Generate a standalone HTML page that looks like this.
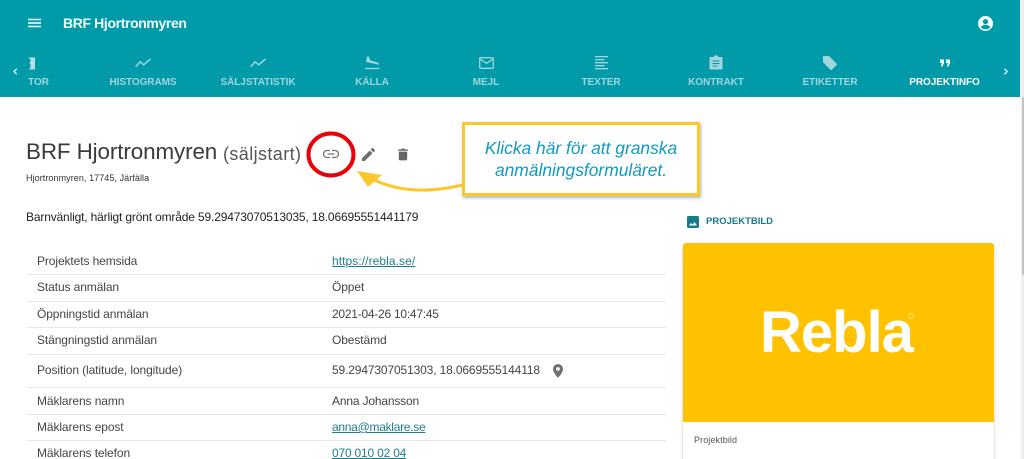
<!DOCTYPE html>
<html lang="sv">
<head>
<meta charset="utf-8">
<title>BRF Hjortronmyren</title>
<style>
html,body{margin:0;padding:0;background:#fff;overflow:hidden;width:1024px;height:459px;}
#p{width:1024px;height:459px;overflow:hidden;position:relative;font-family:"Liberation Sans",sans-serif;color:#333;}
.a{position:absolute;white-space:nowrap;}
#hdr{position:absolute;left:0;top:0;width:1020px;height:97px;background:#009aa9;}
.tab{position:absolute;top:76px;font-size:10px;line-height:13px;font-weight:bold;letter-spacing:-.05px;color:#9fd6dc;transform:translateX(-50%);white-space:nowrap;}
.tab.on{color:#fff;}
.lab,.val{position:absolute;font-size:12px;line-height:16px;color:#444;white-space:nowrap;letter-spacing:-.1px;}
.lab{left:37px;}
.val{left:332px;}
.val.l{color:#1d7f8c;text-decoration:underline;text-underline-offset:1px;}
.rule{position:absolute;left:27px;width:639px;height:1px;background:#e8e8e8;}
svg{position:absolute;overflow:visible;}
</style>
</head>
<body>
<div id="p">
<div id="hdr"></div>

<!-- hamburger -->
<svg style="left:28px;top:18px" width="14" height="10"><path d="M0 1.500h13M0 5h13M0 8.500h13" stroke="#fff" stroke-width="1.500"/></svg>
<div class="a" style="left:63px;top:14px;font-size:14px;line-height:18px;font-weight:bold;color:#f2fbfb;letter-spacing:-.37px">BRF Hjortronmyren</div>
<!-- account -->
<svg style="left:978px;top:15.500px" width="15" height="15" viewBox="0 0 15 15"><circle cx="7.500" cy="7.500" r="7.500" fill="#fff"/><circle cx="7.500" cy="5.600" r="2.600" fill="#009aa9"/><path d="M2.800 11.200c1-1.700 2.900-2.300 4.700-2.300s3.700.6 4.700 2.300c-1.100 1.400-2.800 2.100-4.700 2.100s-3.600-.7-4.700-2.100z" fill="#009aa9"/></svg>

<!-- arrows -->
<svg style="left:12px;top:68px" width="6" height="7"><path d="M4.800.7L2 3.500l2.800 2.800" fill="none" stroke="#d8eff1" stroke-width="1.400"/></svg>
<svg style="left:1003px;top:68px" width="6" height="7"><path d="M1.400.7l2.800 2.800-2.800 2.800" fill="none" stroke="#d8eff1" stroke-width="1.400"/></svg>

<!-- tab icons -->
<svg style="left:28px;top:57px" width="8" height="13"><path d="M0 .5h7V12.500H1l1.500-2V7L1 6l1.500-1V2.500z" fill="#b7e0e5"/></svg>
<svg style="left:135px;top:58px" width="17" height="10"><path d="M.7 8.800l4.500-5 3.500 3L15.500 1" fill="none" stroke="#9fd6dc" stroke-width="1.500"/></svg>
<svg style="left:250px;top:58px" width="17" height="10"><path d="M.7 8.800l4.500-5 3.500 3L15.500 1" fill="none" stroke="#9fd6dc" stroke-width="1.500"/></svg>
<svg style="left:365px;top:56px" width="15" height="14"><path d="M0 12.500h14.500" stroke="#9fd6dc" stroke-width="1.300"/><path d="M2 .5l1.500-.3 2 4.300 5 1.300c1.200.3 2.800.9 3.500 2l-.2 1L1 6z" fill="#9fd6dc"/></svg>
<svg style="left:479px;top:57px" width="15" height="12"><rect x=".7" y=".7" width="13.600" height="10.600" rx="1" fill="none" stroke="#9fd6dc" stroke-width="1.300"/><path d="M1 2l6.500 4.300L14 2" fill="none" stroke="#9fd6dc" stroke-width="1.300"/></svg>
<svg style="left:595px;top:56px" width="13" height="14"><path d="M0 .7h13M0 3.700h9.500M0 6.700h13M0 9.700h9.500M0 12.700h13" stroke="#9fd6dc" stroke-width="1.300"/></svg>
<svg style="left:709px;top:55px" width="14" height="15"><path d="M1.500 2h3c.3-1.100 1.300-1.800 2.500-1.800s2.200.7 2.500 1.800h3c.6 0 1 .4 1 1v10.500c0 .6-.4 1-1 1h-11c-.6 0-1-.4-1-1V3c0-.6.4-1 1-1z" fill="#9fd6dc"/><path d="M3.500 6h7M3.500 8.500h7M3.500 11h5" stroke="#009aa9" stroke-width="1.100"/></svg>
<svg style="left:822px;top:55px" width="15" height="15"><path d="M1 1.800C1 1.300 1.300 1 1.800 1H7l7.600 7.600c.4.400.4 1 0 1.400l-4.700 4.700c-.4.400-1 .4-1.400 0L1 7.200z" fill="#9fd6dc"/></svg>
<svg style="left:940px;top:59px" width="10" height="8"><path d="M0 .5h4v3.500L2.500 7.500H.8L2 4H0zM6 .5h4v3.500L8.500 7.500H6.800L8 4H6z" fill="#fff"/></svg>

<!-- tabs -->
<div class="tab" style="left:38.500px">TOR</div>
<div class="tab" style="left:143px">HISTOGRAMS</div>
<div class="tab" style="left:258px">SÄLJSTATISTIK</div>
<div class="tab" style="left:372px">KÄLLA</div>
<div class="tab" style="left:486px">MEJL</div>
<div class="tab" style="left:601px">TEXTER</div>
<div class="tab" style="left:716px">KONTRAKT</div>
<div class="tab" style="left:830px">ETIKETTER</div>
<div class="tab on" style="left:944.500px">PROJEKTINFO</div>

<!-- title -->
<div class="a" style="left:26px;top:137px;font-size:22.400px;line-height:30px;color:#3a3a3a;letter-spacing:-.1px">BRF Hjortronmyren</div>
<div class="a" style="left:223px;top:143px;font-size:18px;line-height:22px;color:#555;letter-spacing:.4px">(säljstart)</div>
<div class="a" style="left:26px;top:172px;font-size:9px;line-height:12px;color:#333;letter-spacing:.07px">Hjortronmyren, 17745, Järfälla</div>
<div class="a" style="left:26px;top:209px;font-size:12px;line-height:16px;color:#222;letter-spacing:-.16px">Barnvänligt, härligt grönt område 59.29473070513035, 18.06695551441179</div>

<!-- action icons -->
<svg style="left:362px;top:148px" width="13" height="13" viewBox="0 0 14 14"><path d="M0 11v3h3l8.300-8.300-3-3zM13.800 3.200c.3-.3.300-.8 0-1.100L11.900.2c-.3-.3-.8-.3-1.100 0L9.300 1.700l3 3z" fill="#6f6f6f"/></svg>
<svg style="left:398px;top:148px" width="10" height="13" viewBox="0 0 12 14"><path d="M1 3.500h10V12.500c0 .8-.7 1.500-1.500 1.500h-7C1.700 14 1 13.300 1 12.500zM0 1h3.200l1-1h3.600l1 1H12v1.500H0z" fill="#666"/></svg>

<!-- red circle -->
<svg style="left:0;top:0" width="1024" height="459"><ellipse cx="331" cy="154.500" rx="22.500" ry="21" fill="#fff" stroke="#e8000b" stroke-width="4"/>
<path d="M330 150.500h-3a3.500 3.500 0 0 0 0 7h3M332 150.500h3a3.500 3.500 0 0 1 0 7h-3M327.500 154h7" fill="none" stroke="#757575" stroke-width="1.300"/>
<!-- callout arrow -->
<path d="M463 185C440 190 405 196 370 178" fill="none" stroke="#fcc72d" stroke-width="3"/><path d="M357 171L382 175 368 187z" fill="#fcc72d"/></svg>

<!-- callout -->
<div class="a" style="left:462px;top:122px;width:232px;height:68px;border:3px solid #fcc72d;background:#fff;box-shadow:1px 2px 3px rgba(0,0,0,.3);"></div>
<div class="a" style="left:462px;top:137px;width:238px;text-align:center;font-size:17.400px;line-height:22px;font-style:italic;color:#0f9ac4;">Klicka här för att granska<br>anmälningsformuläret.</div>

<!-- table -->
<div class="lab" style="top:253px">Projektets hemsida</div><div class="val l" style="top:253px;letter-spacing:.07px">https://rebla.se/</div>
<div class="rule" style="top:274px"></div>
<div class="lab" style="top:279px">Status anmälan</div><div class="val" style="top:279px">Öppet</div>
<div class="rule" style="top:301px"></div>
<div class="lab" style="top:306px">Öppningstid anmälan</div><div class="val" style="top:306px;letter-spacing:-.25px">2021-04-26 10:47:45</div>
<div class="rule" style="top:327px"></div>
<div class="lab" style="top:332px">Stängningstid anmälan</div><div class="val" style="top:332px">Obestämd</div>
<div class="rule" style="top:354px"></div>
<div class="lab" style="top:362px">Position (latitude, longitude)</div><div class="val" style="top:362px;letter-spacing:-.14px">59.2947307051303, 18.0669555144118</div>
<svg style="left:553px;top:364px" width="10" height="14" viewBox="0 0 11 15"><path d="M5.500 0C2.500 0 0 2.400 0 5.400 0 9.400 5.500 15 5.500 15S11 9.400 11 5.400C11 2.400 8.500 0 5.500 0z" fill="#707070"/><circle cx="5.500" cy="5.300" r="2" fill="#fff"/></svg>
<div class="rule" style="top:387px"></div>
<div class="lab" style="top:393px">Mäklarens namn</div><div class="val" style="top:393px;letter-spacing:-.17px">Anna Johansson</div>
<div class="rule" style="top:414px"></div>
<div class="lab" style="top:419px">Mäklarens epost</div><div class="val l" style="top:419px;letter-spacing:-.28px">anna@maklare.se</div>
<div class="rule" style="top:440px"></div>
<div class="lab" style="top:445px">Mäklarens telefon</div><div class="val l" style="top:445px;letter-spacing:-.2px">070 010 02 04</div>

<!-- right column -->
<svg style="left:687px;top:216px" width="12" height="12"><rect width="12" height="12" rx="1.500" fill="#157a8a"/><path d="M2 9.500l2-2.500 1.500 1.500L7.500 6l2.500 3.500z" fill="#fff"/></svg>
<div class="a" style="left:706px;top:215px;font-size:9.500px;line-height:13px;font-weight:bold;color:#157a8a;">PROJEKTBILD</div>

<div class="a" style="left:683px;top:243px;width:311px;height:230px;border-radius:3px;background:#fff;box-shadow:0 1px 3px rgba(0,0,0,.22);"></div>
<div class="a" style="left:683px;top:243px;width:311px;height:179px;background:#fec200;border-radius:3px 3px 0 0;"></div>
<div class="a" style="left:760px;top:298px;font-size:58px;line-height:70px;font-weight:bold;color:#fff;letter-spacing:-1px;">Rebla</div>
<svg style="left:908px;top:313px" width="7" height="7"><circle cx="3" cy="3" r="2.400" fill="none" stroke="#ffe28a" stroke-width="1"/></svg>
<div class="a" style="left:694px;top:434px;font-size:9px;line-height:12px;color:#555;letter-spacing:.1px">Projektbild</div>

<!-- scrollbar -->
<div class="a" style="left:1021px;top:0;width:3px;height:459px;background:#eeeeee;"></div>
<div class="a" style="left:1022px;top:97px;width:2px;height:178px;background:#c4c4c4;border-radius:1px;"></div>
</div>
</body>
</html>
